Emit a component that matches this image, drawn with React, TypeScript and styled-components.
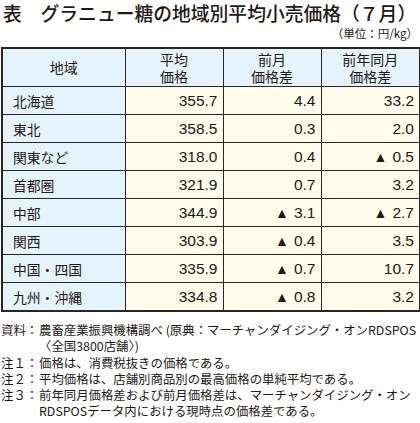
import React from "react";
import styled, { createGlobalStyle } from "styled-components";

const Global = createGlobalStyle`
  html, body { margin: 0; padding: 0; background: #ffffff; }
  body { width: 420px; font-family: "Liberation Sans", "Noto Sans CJK JP", sans-serif; color: #231815; }
`;

const Page = styled.div`
  width: 420px;
  padding: 0 1px;
  box-sizing: border-box;
`;

const Title = styled.h1`
  margin: 0;
  padding: 0 0 0 2px;
  font-family: "Noto Sans CJK JP", sans-serif;
  font-weight: 500;
  font-size: 18.8px;
  line-height: 25px;
  white-space: nowrap;
`;

const Unit = styled.div`
  text-align: right;
  font-family: "Noto Sans CJK JP", sans-serif;
  font-size: 11.5px;
  line-height: 16px;
  margin-top: 0;
  padding-right: 1px;
  height: 22px;
`;

const Table = styled.table`
  width: 418px;
  border-collapse: collapse;
  table-layout: fixed;
  border: 2px solid #2b2522;
`;

const HeadCell = styled.th`
  background: #e5f3fc;
  border: 1.5px solid #2b2522;
  font-family: "Noto Sans CJK JP", sans-serif;
  font-weight: 400;
  font-size: 14px;
  line-height: 17px;
  height: 37px;
  padding: 0;
  text-align: center;
  vertical-align: middle;
`;

const LabelCell = styled.td`
  background: #e5f3fc;
  border: 1.5px solid #2b2522;
  font-family: "Noto Sans CJK JP", sans-serif;
  font-size: 13.8px;
  height: 27px;
  padding: 0 0 0 10px;
  vertical-align: middle;
  white-space: nowrap;
`;

const NumCell = styled.td`
  background: #fffcec;
  border: 1.5px solid #2b2522;
  font-family: "Liberation Sans", sans-serif;
  font-size: 15.5px;
  height: 27px;
  padding: 0 5px 0 0;
  text-align: right;
  vertical-align: middle;
  white-space: nowrap;
`;

const Tri = styled.span`
  font-size: 14px;
  margin-right: 5px;
`;

const Notes = styled.div`
  margin-top: 10px;
  font-family: "Noto Sans CJK JP", sans-serif;
  font-size: 12.4px;
  line-height: 16.3px;
`;

const NoteRow = styled.div`
  display: flex;
  white-space: nowrap;
`;

const NoteLabel = styled.span`
  flex: 0 0 38px;
`;

const NoteText = styled.span`
  display: block;
`;

type Row = { name: string; avg: string; mom: string; yoy: string };

const rows: Row[] = [
  { name: "北海道", avg: "355.7", mom: "4.4", yoy: "33.2" },
  { name: "東北", avg: "358.5", mom: "0.3", yoy: "2.0" },
  { name: "関東など", avg: "318.0", mom: "0.4", yoy: "▲0.5" },
  { name: "首都圏", avg: "321.9", mom: "0.7", yoy: "3.2" },
  { name: "中部", avg: "344.9", mom: "▲3.1", yoy: "▲2.7" },
  { name: "関西", avg: "303.9", mom: "▲0.4", yoy: "3.5" },
  { name: "中国・四国", avg: "335.9", mom: "▲0.7", yoy: "10.7" },
  { name: "九州・沖縄", avg: "334.8", mom: "▲0.8", yoy: "3.2" },
];

const Num: React.FC<{ v: string }> = ({ v }) =>
  v.startsWith("▲") ? (
    <>
      <Tri>▲</Tri>
      {v.slice(1)}
    </>
  ) : (
    <>{v}</>
  );

export default function App() {
  return (
    <Page>
      <Global />
      <Title>表　グラニュー糖の地域別平均小売価格（７月）</Title>
      <Unit>（単位：円/kg）</Unit>
      <Table>
        <colgroup>
          <col style={{ width: 123 }} />
          <col style={{ width: 98 }} />
          <col style={{ width: 98 }} />
          <col style={{ width: 99 }} />
        </colgroup>
        <thead>
          <tr>
            <HeadCell>地域</HeadCell>
            <HeadCell>
              平均
              <br />
              価格
            </HeadCell>
            <HeadCell>
              前月
              <br />
              価格差
            </HeadCell>
            <HeadCell>
              前年同月
              <br />
              価格差
            </HeadCell>
          </tr>
        </thead>
        <tbody>
          {rows.map((r) => (
            <tr key={r.name}>
              <LabelCell>{r.name}</LabelCell>
              <NumCell>{r.avg}</NumCell>
              <NumCell>
                <Num v={r.mom} />
              </NumCell>
              <NumCell>
                <Num v={r.yoy} />
              </NumCell>
            </tr>
          ))}
        </tbody>
      </Table>
      <Notes>
        <NoteRow>
          <NoteLabel>資料：</NoteLabel>
          <NoteText>
            農畜産業振興機構調べ (原典：マーチャンダイジング・オンRDSPOS
            <br />
            〈全国3800店舗〉)
          </NoteText>
        </NoteRow>
        <NoteRow>
          <NoteLabel>注１：</NoteLabel>
          <NoteText>価格は、消費税抜きの価格である。</NoteText>
        </NoteRow>
        <NoteRow>
          <NoteLabel>注２：</NoteLabel>
          <NoteText>平均価格は、店舗別商品別の最高価格の単純平均である。</NoteText>
        </NoteRow>
        <NoteRow>
          <NoteLabel>注３：</NoteLabel>
          <NoteText>
            前年同月価格差および前月価格差は、マーチャンダイジング・オン
            <br />
            RDSPOSデータ内における現時点の価格差である。
          </NoteText>
        </NoteRow>
      </Notes>
    </Page>
  );
}
